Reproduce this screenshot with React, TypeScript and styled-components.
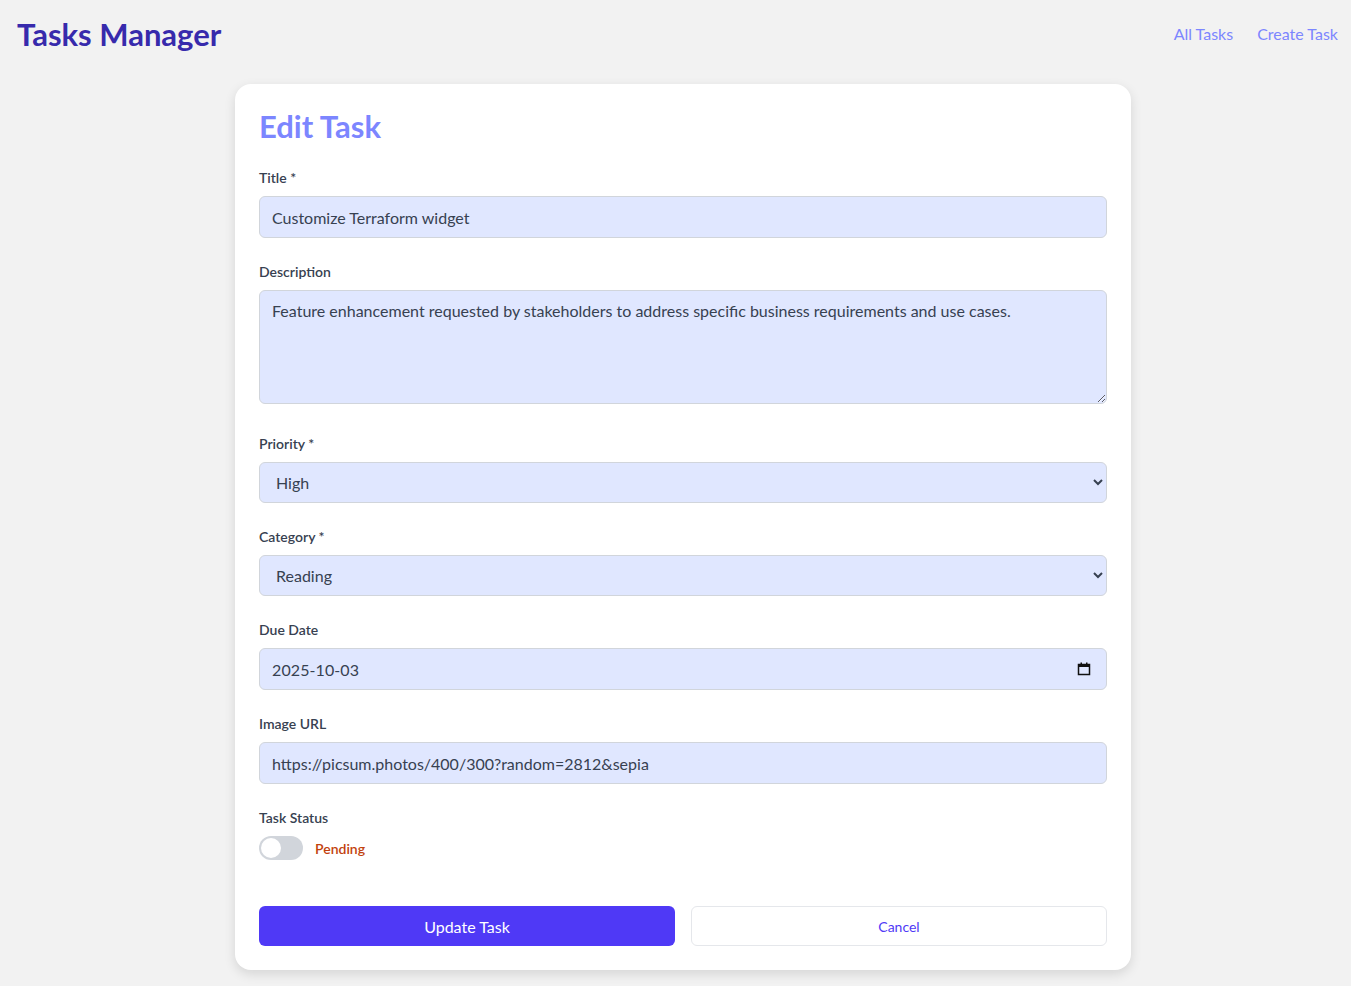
import React, { useState } from 'react';
import styled, { createGlobalStyle } from 'styled-components';

const GlobalStyle = createGlobalStyle`
  body {
    margin: 0;
    background: #f2f2f2;
    font-family: "Segoe UI", Lato, "Liberation Sans", sans-serif;
    color: #374151;
  }
  * { box-sizing: border-box; }
`;

const CalendarIcon = () => (
  <svg width="14" height="14" viewBox="0 0 14 14" fill="none">
    <rect x="1.5" y="2.5" width="11" height="10" stroke="#111" strokeWidth="1.5" />
    <rect x="1.5" y="2.5" width="11" height="2.5" fill="#111" />
    <rect x="3.5" y="0.5" width="1.5" height="2.5" fill="#111" />
    <rect x="9" y="0.5" width="1.5" height="2.5" fill="#111" />
  </svg>
);

const App: React.FC = () => {
  const [title, setTitle] = useState('Customize Terraform widget');
  const [description, setDescription] = useState(
    'Feature enhancement requested by stakeholders to address specific business requirements and use cases.'
  );
  const [priority, setPriority] = useState('High');
  const [category, setCategory] = useState('Reading');
  const [dueDate, setDueDate] = useState('2025-10-03');
  const [image, setImage] = useState('https://picsum.photos/400/300?random=2812&sepia');
  const [done, setDone] = useState(false);

  return (
    <>
      <GlobalStyle />
      <Header>
        <Brand>Tasks Manager</Brand>
        <Nav>
          <NavLink href="#">All Tasks</NavLink>
          <NavLink href="#">Create Task</NavLink>
        </Nav>
      </Header>
      <Main>
        <Card onSubmit={(e) => e.preventDefault()}>
          <Heading>Edit Task</Heading>

          <Field>
            <Label htmlFor="title">Title *</Label>
            <Input id="title" type="text" value={title} onChange={(e) => setTitle(e.target.value)} />
          </Field>

          <Field>
            <Label htmlFor="description">Description</Label>
            <Textarea
              id="description"
              value={description}
              onChange={(e) => setDescription(e.target.value)}
            />
          </Field>

          <Field>
            <Label htmlFor="priority">Priority *</Label>
            <Select id="priority" value={priority} onChange={(e) => setPriority(e.target.value)}>
              <option>Low</option>
              <option>Medium</option>
              <option>High</option>
            </Select>
          </Field>

          <Field>
            <Label htmlFor="category">Category *</Label>
            <Select id="category" value={category} onChange={(e) => setCategory(e.target.value)}>
              <option>Work</option>
              <option>Personal</option>
              <option>Reading</option>
            </Select>
          </Field>

          <Field>
            <Label htmlFor="due">Due Date</Label>
            <DateWrap>
              <Input
                id="due"
                type="text"
                value={dueDate}
                onChange={(e) => setDueDate(e.target.value)}
                $spaced
              />
              <DateIcon>
                <CalendarIcon />
              </DateIcon>
            </DateWrap>
          </Field>

          <Field>
            <Label htmlFor="image">Image URL</Label>
            <Input id="image" type="text" value={image} onChange={(e) => setImage(e.target.value)} />
          </Field>

          <Field>
            <Label as="span">Task Status</Label>
            <StatusRow>
              <Toggle type="button" $on={done} onClick={() => setDone(!done)}>
                <Knob $on={done} />
              </Toggle>
              <StatusText $on={done}>{done ? 'Completed' : 'Pending'}</StatusText>
            </StatusRow>
          </Field>

          <Actions>
            <PrimaryButton type="submit">Update Task</PrimaryButton>
            <SecondaryButton type="button">Cancel</SecondaryButton>
          </Actions>
        </Card>
      </Main>
    </>
  );
};

export default App;

const Header = styled.header`
  display: flex;
  align-items: center;
  justify-content: space-between;
  height: 68px;
  padding: 0 13px 0 17px;
`;

const Brand = styled.h1`
  margin: 0;
  font-size: 31px;
  font-weight: 700;
  color: #372aac;
`;

const Nav = styled.nav`
  display: flex;
  gap: 24px;
  margin-top: -2px;
`;

const NavLink = styled.a`
  font-size: 16px;
  color: #7c86ff;
  text-decoration: none;
`;

const Main = styled.main`
  display: flex;
  justify-content: center;
  padding: 16px 0 16px 15px;
`;

const Card = styled.form`
  width: 896px;
  background: #fff;
  border-radius: 16px;
  padding: 24px;
  box-shadow: 0 4px 12px rgba(0, 0, 0, 0.12);
`;

const Heading = styled.h2`
  margin: 0 0 24px;
  font-size: 31px;
  line-height: 36px;
  font-weight: 700;
  color: #7c86ff;
`;

const Field = styled.div`
  display: flex;
  flex-direction: column;
  margin-bottom: 24px;
`;

const Label = styled.label`
  font-size: 14px;
  line-height: 20px;
  font-weight: 600;
  color: #374151;
  margin-bottom: 8px;
`;

const fieldBase = `
  width: 100%;
  background: #e0e7ff;
  border: 1px solid #d1d5db;
  border-radius: 6px;
  font-family: inherit;
  font-size: 16px;
  color: #374151;
  outline: none;
`;

const Input = styled.input<{ $spaced?: boolean }>`
  ${fieldBase}
  height: 42px;
  padding: 0 12px;
  letter-spacing: ${(p) => (p.$spaced ? '0.1px' : 'normal')};
`;

const DateWrap = styled.div`
  position: relative;
`;

const DateIcon = styled.span`
  position: absolute;
  right: 16px;
  top: 14px;
  display: flex;
  pointer-events: none;
`;

const Textarea = styled.textarea`
  ${fieldBase}
  display: block;
  height: 114px;
  padding: 8px 12px;
  line-height: 24px;
  margin-bottom: 6px;
  resize: vertical;
`;

const Select = styled.select`
  ${fieldBase}
  height: 41px;
  padding: 0 12px;
`;

const StatusRow = styled.div`
  display: flex;
  align-items: center;
  gap: 12px;
`;

const Toggle = styled.button<{ $on: boolean }>`
  position: relative;
  width: 44px;
  height: 24px;
  border: none;
  padding: 0;
  border-radius: 12px;
  background: ${(p) => (p.$on ? '#4f39f6' : '#d1d5db')};
  cursor: pointer;
`;

const Knob = styled.span<{ $on: boolean }>`
  position: absolute;
  top: 2px;
  left: ${(p) => (p.$on ? '22px' : '2px')};
  width: 20px;
  height: 20px;
  border-radius: 50%;
  background: #fff;
`;

const StatusText = styled.span<{ $on: boolean }>`
  font-size: 14px;
  font-weight: 600;
  color: ${(p) => (p.$on ? '#15803d' : '#c2410c')};
`;

const Actions = styled.div`
  display: grid;
  grid-template-columns: 1fr 1fr;
  gap: 16px;
  margin-top: 46px;
`;

const PrimaryButton = styled.button`
  height: 40px;
  border: none;
  border-radius: 6px;
  background: #4f39f6;
  color: #fff;
  font-family: inherit;
  font-size: 16px;
  cursor: pointer;
`;

const SecondaryButton = styled.button`
  height: 40px;
  border: 1px solid #e5e7eb;
  border-radius: 6px;
  background: #fff;
  color: #4f39f6;
  font-family: inherit;
  font-size: 14px;
  cursor: pointer;
`;
